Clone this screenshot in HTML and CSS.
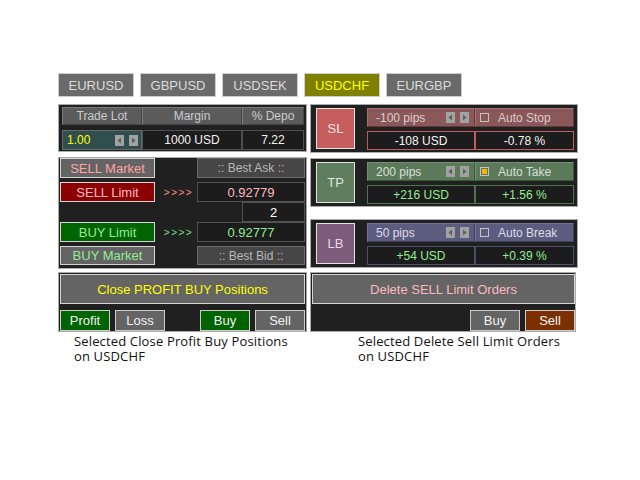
FILE: index.html
```html
<!DOCTYPE html>
<html>
<head>
<meta charset="utf-8">
<link rel="stylesheet" href="styles.css">
</head>
<body>
<div class="page">
  <div class="tabs">
    <div class="tab">EURUSD</div>
    <div class="tab">GBPUSD</div>
    <div class="tab">USDSEK</div>
    <div class="tab tab-active">USDCHF</div>
    <div class="tab">EURGBP</div>
  </div>

  <div class="top">
    <div class="col-left">
      <div class="panel p1">
        <div class="hcell">Trade Lot</div>
        <div class="hcell">Margin</div>
        <div class="hcell">% Depo</div>
        <div class="lotcell">
          <span class="lot">1.00</span>
          <span class="arrows">
            <svg class="arr" viewBox="0 0 9 11"><rect width="9" height="11" fill="#a2a2a2"/><polygon points="6,2.5 2.5,5.5 6,8.5" fill="#5e5e5e"/></svg>
            <svg class="arr" viewBox="0 0 9 11"><rect width="9" height="11" fill="#a2a2a2"/><polygon points="3,2.5 6.5,5.5 3,8.5" fill="#5e5e5e"/></svg>
          </span>
        </div>
        <div class="vcell">1000 USD</div>
        <div class="vcell">7.22</div>
      </div>

      <div class="panel p2">
        <div class="row">
          <div class="btn btn-gray c-pink">SELL Market</div>
          <div></div>
          <div class="best">:: Best Ask ::</div>
        </div>
        <div class="row row-gap">
          <div class="btn btn-red c-pink2">SELL Limit</div>
          <div class="chev c-pinkchev">&gt;&gt;&gt;&gt;</div>
          <div class="price c-pink2">0.92779</div>
        </div>
        <div class="row">
          <div></div>
          <div></div>
          <div class="spread-wrap"><div class="spread">2</div></div>
        </div>
        <div class="row">
          <div class="btn btn-green c-green">BUY Limit</div>
          <div class="chev c-greenchev">&gt;&gt;&gt;&gt;</div>
          <div class="price c-green">0.92777</div>
        </div>
        <div class="row row-gap row-last">
          <div class="btn btn-gray c-green">BUY Market</div>
          <div></div>
          <div class="best">:: Best Bid ::</div>
        </div>
      </div>
    </div>

    <div class="col-right">
      <div class="panel rp rp-sl">
        <div class="box">SL</div>
        <div class="cells">
          <div class="pips">
            <span>-100 pips</span>
            <span class="arrows">
              <svg class="arr" viewBox="0 0 9 11"><rect width="9" height="11" fill="#a2a2a2"/><polygon points="6,2.5 2.5,5.5 6,8.5" fill="#5e5e5e"/></svg>
              <svg class="arr" viewBox="0 0 9 11"><rect width="9" height="11" fill="#a2a2a2"/><polygon points="3,2.5 6.5,5.5 3,8.5" fill="#5e5e5e"/></svg>
            </span>
          </div>
          <div class="auto"><span class="chk"></span><span>Auto Stop</span></div>
          <div class="val">-108 USD</div>
          <div class="val">-0.78 %</div>
        </div>
      </div>

      <div class="panel rp rp-tp">
        <div class="box">TP</div>
        <div class="cells">
          <div class="pips">
            <span>200 pips</span>
            <span class="arrows">
              <svg class="arr" viewBox="0 0 9 11"><rect width="9" height="11" fill="#a2a2a2"/><polygon points="6,2.5 2.5,5.5 6,8.5" fill="#5e5e5e"/></svg>
              <svg class="arr" viewBox="0 0 9 11"><rect width="9" height="11" fill="#a2a2a2"/><polygon points="3,2.5 6.5,5.5 3,8.5" fill="#5e5e5e"/></svg>
            </span>
          </div>
          <div class="auto"><span class="chk chk-on"></span><span>Auto Take</span></div>
          <div class="val">+216 USD</div>
          <div class="val">+1.56 %</div>
        </div>
      </div>

      <div class="panel rp rp-lb">
        <div class="box">LB</div>
        <div class="cells">
          <div class="pips">
            <span>50 pips</span>
            <span class="arrows">
              <svg class="arr" viewBox="0 0 9 11"><rect width="9" height="11" fill="#a2a2a2"/><polygon points="6,2.5 2.5,5.5 6,8.5" fill="#5e5e5e"/></svg>
              <svg class="arr" viewBox="0 0 9 11"><rect width="9" height="11" fill="#a2a2a2"/><polygon points="3,2.5 6.5,5.5 3,8.5" fill="#5e5e5e"/></svg>
            </span>
          </div>
          <div class="auto"><span class="chk"></span><span>Auto Break</span></div>
          <div class="val">+54 USD</div>
          <div class="val">+0.39 %</div>
        </div>
      </div>
    </div>
  </div>

  <div class="bottom">
    <div class="panel p3">
      <div class="bigbtn c-yellow">Close PROFIT BUY Positions</div>
      <div class="smallrow">
        <div class="sbtn sb-green">Profit</div>
        <div class="sbtn sb-gray">Loss</div>
        <div class="sbtn sb-green push">Buy</div>
        <div class="sbtn sb-gray">Sell</div>
      </div>
    </div>
    <div class="panel p4">
      <div class="bigbtn c-pink2">Delete SELL Limit Orders</div>
      <div class="smallrow">
        <div class="sbtn sb-gray push">Buy</div>
        <div class="sbtn sb-brown">Sell</div>
      </div>
    </div>
  </div>

  <div class="captions">
    <div class="cap cap-left">Selected Close Profit Buy Positions<br>on USDCHF</div>
    <div class="cap cap-right">Selected Delete Sell Limit Orders<br>on USDCHF</div>
  </div>
</div>
</body>
</html>
```

FILE: styles.css
```css
* { box-sizing: border-box; }

body {
  margin: 0;
  background: #ffffff;
  font-family: "Liberation Sans", Arial, sans-serif;
  color: #e0e0e0;
}

.page {
  padding: 73px 0 0 58px;
}

/* tabs */
.tabs {
  display: flex;
  gap: 6px;
}
.tab {
  width: 76px;
  height: 24px;
  border: 1px solid #cfcfcf;
  background: #6a6a6a;
  color: #dadada;
  font-size: 13px;
  display: flex;
  align-items: center;
  justify-content: center;
}
.tab-active {
  background: #808000;
  color: #ffff00;
}

/* layout */
.top {
  display: flex;
  gap: 3px;
  margin-top: 7px;
  height: 165px;
}
.col-left {
  width: 249px;
  display: flex;
  flex-direction: column;
  gap: 5px;
}
.col-right {
  width: 268px;
  display: flex;
  flex-direction: column;
}

.panel {
  border: 1px solid #ababab;
  background: #202020;
}

/* panel 1 */
.p1 {
  height: 48px;
  padding: 2px 2px 0 3px;
  display: grid;
  grid-template-columns: 80px 100px 62px;
  grid-template-rows: 18px 20px;
  row-gap: 5px;
}
.hcell {
  background: #5b5b5b;
  border: 1px solid;
  border-color: #7a7a7a #464646 #464646 #7a7a7a;
  color: #cccccc;
  font-size: 12px;
  display: flex;
  align-items: center;
  justify-content: center;
}
.lotcell {
  background: #2f4f4f;
  border: 1px solid #6a6a6a;
  display: flex;
  align-items: center;
  padding: 0 3px 0 4px;
}
.lot {
  color: #ffff00;
  font-size: 12px;
}
.arrows {
  margin-left: auto;
  display: flex;
  gap: 5px;
}
.arr {
  width: 9px;
  height: 11px;
  display: block;
}
.vcell {
  background: #1c1c1c;
  border: 1px solid #505050;
  color: #f4f4f4;
  font-size: 12px;
  display: flex;
  align-items: center;
  justify-content: center;
}

/* panel 2 */
.p2 {
  height: 112px;
  padding: 0 1px 2px 1px;
}
.row {
  display: grid;
  grid-template-columns: 95px 42px 108px;
  height: 20px;
}
.row-gap { margin-top: 4px; }
.row-last { height: 19px; }

.btn {
  border: 1px solid #d4d4d4;
  font-size: 13px;
  display: flex;
  align-items: center;
  justify-content: center;
}
.btn-gray { background: #646464; }
.btn-red { background: #8b0000; }
.btn-green { background: #006400; }

.c-pink { color: #ffa4a4; }
.c-pink2 { color: #ffb8c0; }
.c-green { color: #90ee90; }
.c-yellow { color: #ffff00; }
.c-pinkchev { color: #ff8c8c; }
.c-greenchev { color: #80e080; }

.chev {
  font-size: 10px;
  letter-spacing: 1.5px;
  display: flex;
  align-items: center;
  justify-content: center;
  padding-left: 5px;
}
.best {
  background: #464646;
  border: 1px solid #6c6c6c;
  color: #b8b8b8;
  font-size: 12px;
  display: flex;
  align-items: center;
  justify-content: center;
}
.price {
  background: #1c1c1c;
  border: 1px solid #505050;
  font-size: 13px;
  display: flex;
  align-items: center;
  justify-content: center;
}
.spread-wrap {
  display: flex;
  justify-content: flex-end;
}
.spread {
  width: 63px;
  background: #1c1c1c;
  border: 1px solid #505050;
  color: #ffffff;
  font-size: 13px;
  display: flex;
  align-items: center;
  justify-content: center;
}

/* right panels */
.rp {
  height: 49px;
  padding: 3px 3px 2px 5px;
  display: flex;
  gap: 12px;
}
.rp-tp { margin-top: 5px; }
.rp-lb { margin-top: 12px; }

.box {
  width: 39px;
  height: 41px;
  border: 1px solid #e4e4e4;
  font-size: 13px;
  display: flex;
  align-items: center;
  justify-content: center;
}
.cells {
  display: grid;
  grid-template-columns: 108px 99px;
  grid-template-rows: 19px 19px;
  row-gap: 4px;
}
.pips {
  border: 1px solid;
  font-size: 12px;
  display: flex;
  align-items: center;
  padding: 0 5px 0 8px;
}
.auto {
  border: 1px solid;
  font-size: 12px;
  display: flex;
  align-items: center;
  padding-left: 4px;
  gap: 9px;
}
.chk {
  width: 9px;
  height: 9px;
  border: 1px solid #c4c4c4;
}
.chk-on {
  background: #ffb400;
  box-shadow: inset 0 0 0 1px #5a7a5a;
}
.val {
  background: #1c1c1c;
  border: 1px solid;
  font-size: 12px;
  display: flex;
  align-items: center;
  justify-content: center;
}

.rp-sl .box { background: #c65e5e; color: #f2e4e4; }
.rp-sl .pips, .rp-sl .auto {
  background: #8a5858;
  border-color: #a27272 #603a3a #603a3a #a27272;
  color: #dccccc;
}
.rp-sl .val { border-color: #c05c5c; color: #f4f4f4; }

.rp-tp .box { background: #5e7e5e; color: #dfe8df; }
.rp-tp .pips, .rp-tp .auto {
  background: #5a7a5a;
  border-color: #739073 #3e563e #3e563e #739073;
  color: #d8e0d8;
}
.rp-tp .val { border-color: #4e744e; color: #90ee90; }

.rp-lb .box { background: #7e5c7c; color: #e6d8e6; }
.rp-lb .pips, .rp-lb .auto {
  background: #5c5c80;
  border-color: #74749a #40405a #40405a #74749a;
  color: #dcdce6;
}
.rp-lb .val { border-color: #4e4e6c; color: #90ee90; }

/* bottom */
.bottom {
  display: flex;
  gap: 3px;
  margin-top: 3px;
}
.p3 {
  width: 249px;
  height: 60px;
  padding: 1px;
}
.p4 {
  width: 266px;
  height: 60px;
  padding: 1px 0 1px 1px;
}
.bigbtn {
  height: 30px;
  background: #646464;
  border: 1px solid #d4d4d4;
  font-size: 13px;
  display: flex;
  align-items: center;
  justify-content: center;
}
.smallrow {
  display: flex;
  gap: 5px;
  margin-top: 6px;
  height: 21px;
}
.sbtn {
  width: 50px;
  border: 1px solid #cccccc;
  color: #f2f2f2;
  font-size: 13px;
  display: flex;
  align-items: center;
  justify-content: center;
}
.push { margin-left: auto; }
.sb-green { background: #006400; }
.sb-gray { background: #646464; }
.sb-brown { background: #7a3000; }

/* captions */
.captions {
  display: flex;
  gap: 3px;
  margin-top: 2px;
}
.cap {
  font-family: "Open Sans", "Noto Sans", sans-serif;
  font-size: 13px;
  line-height: 15px;
  letter-spacing: 0.15px;
  color: #111111;
}
.cap-left {
  width: 249px;
  padding-left: 16px;
}
.cap-right {
  padding-left: 48px;
}
```
